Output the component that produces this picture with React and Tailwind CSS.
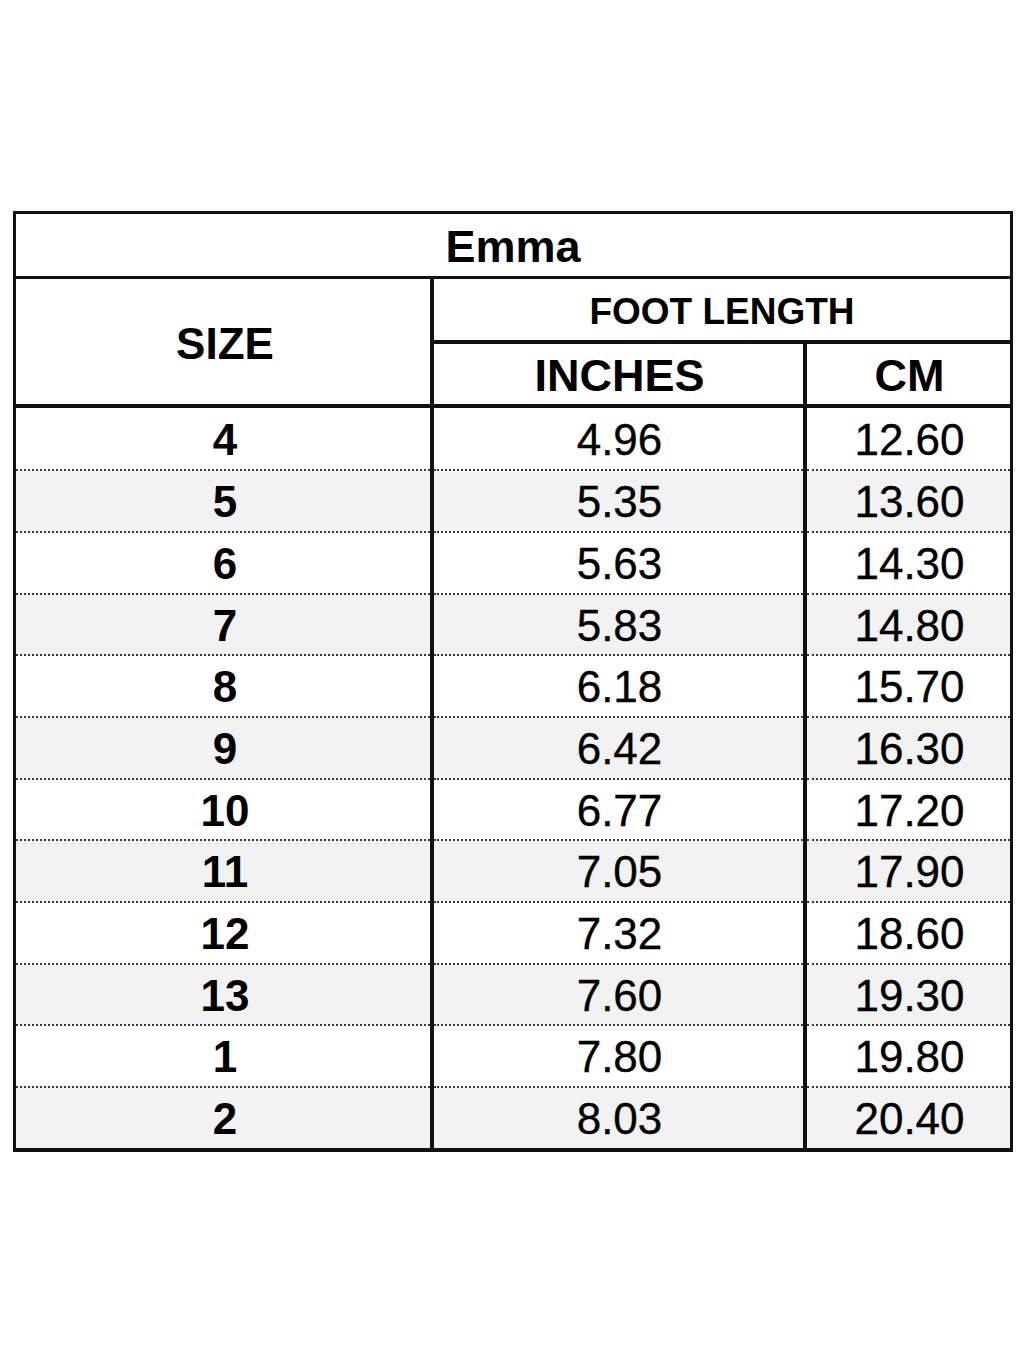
import React from "react";

const rows = [
  ["4", "4.96", "12.60"],
  ["5", "5.35", "13.60"],
  ["6", "5.63", "14.30"],
  ["7", "5.83", "14.80"],
  ["8", "6.18", "15.70"],
  ["9", "6.42", "16.30"],
  ["10", "6.77", "17.20"],
  ["11", "7.05", "17.90"],
  ["12", "7.32", "18.60"],
  ["13", "7.60", "19.30"],
  ["1", "7.80", "19.80"],
  ["2", "8.03", "20.40"],
];

const heights = [
  "h-[63px]",
  "h-[62px]",
  "h-[62px]",
  "h-[61px]",
  "h-[62px]",
  "h-[62px]",
  "h-[61px]",
  "h-[62px]",
  "h-[62px]",
  "h-[61px]",
  "h-[62px]",
  "h-[60px]",
];

function Column({ idx, bold, className }) {
  return (
    <div className={"flex flex-col " + className}>
      {rows.map((r, i) => {
        const last = i === rows.length - 1;
        const gray = i % 2 === 1;
        return (
          <div
            key={i}
            className={
              "flex items-center justify-center leading-none text-[44px] " +
              heights[i] +
              " " +
              (bold ? "font-bold " : "font-normal [-webkit-text-stroke:0.35px_black] ") +
              (gray ? "bg-[#f2f2f2] " : "bg-white ") +
              (last ? "" : "border-b-2 border-dotted border-[#3a3a3a]")
            }
          >
            <span className={idx === 0 ? "pl-[4px] pt-[2px]" : "pl-[2px] pt-[2px]"}>{r[idx]}</span>
          </div>
        );
      })}
    </div>
  );
}

export default function App() {
  return (
    <div
      className="w-[1024px] h-[1365px] bg-white text-black"
      style={{ fontFamily: '"Liberation Sans", Arial, sans-serif' }}
    >
      <div className="pt-[211px] pl-[13px]">
        <div className="w-[1000px] border-[3px] border-b-4 border-[#111] box-border">
          <div className="h-[65px] border-b-[3px] border-[#111] flex items-center justify-center font-bold text-[45px] leading-none">
            <span className="pt-[2px]">Emma</span>
          </div>
          <div className="flex h-[129px] border-b-4 border-[#111]">
            <div className="w-[418px] border-r-4 border-[#111] flex items-center justify-center font-bold text-[44px] leading-none">
              <span className="pt-[4px] pl-[4px]">SIZE</span>
            </div>
            <div className="flex-1 flex flex-col">
              <div className="h-[65px] border-b-4 border-[#111] flex items-center justify-center font-bold text-[37px] leading-none">
                <span className="pt-[4px]">FOOT LENGTH</span>
              </div>
              <div className="flex flex-1">
                <div className="w-[373px] border-r-4 border-[#111] flex items-center justify-center font-bold text-[45px] leading-none">
                  <span className="pt-[2px] pl-[2px]">INCHES</span>
                </div>
                <div className="flex-1 flex items-center justify-center font-bold text-[45px] leading-none">
                  <span className="pt-[2px] pl-[2px]">CM</span>
                </div>
              </div>
            </div>
          </div>
          <div className="flex">
            <Column idx={0} bold className="w-[418px] border-r-4 border-[#111]" />
            <Column idx={1} className="w-[373px] border-r-4 border-[#111]" />
            <Column idx={2} className="flex-1" />
          </div>
        </div>
      </div>
    </div>
  );
}
